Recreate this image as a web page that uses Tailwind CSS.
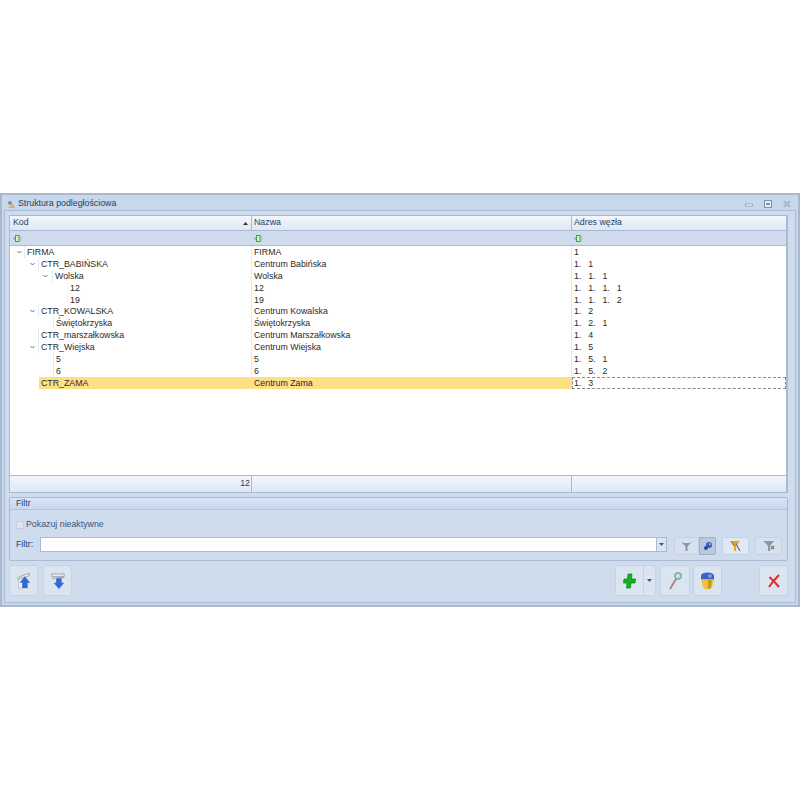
<!DOCTYPE html>
<html lang="en">
<head>
    <meta charset="UTF-8">
    <title>Struktura podległościowa</title>
    <script src="https://cdn.jsdelivr.net/npm/@tailwindcss/browser@4"></script>
</head>
<body class="bg-white h-[800px] overflow-hidden pt-[193px] font-['Liberation_Sans',sans-serif] text-[8.8px] text-[#2a2a2a]">

    <!-- window -->
    <div class="h-[414px] w-[800px] flex flex-col bg-[#c8d8ec] border-2 border-[#a9b8cd] px-[2px] pb-[2px]">
        <!-- title bar -->
        <div class="h-[15px] flex items-center pl-[3px] pr-[5px] pt-[3px] text-[#26405f] shrink-0">
            <svg class="w-[9px] h-[9px] mr-[2px]" viewBox="0 0 9 9"><circle cx="3" cy="3" r="2" fill="#8a8f96"/><path d="M1 8 L8 8 L6 4 Z" fill="#d9b46a"/></svg>
            <span>Struktura podległościowa</span>
            <div class="ml-auto flex items-center gap-[11px]">
                <svg class="w-[8px] h-[8px]" viewBox="0 0 8 8"><rect x="0.5" y="4" width="7" height="2" fill="#fff" stroke="#7d92ae" stroke-width="0.7"/></svg>
                <svg class="w-[8px] h-[8px]" viewBox="0 0 8 8"><rect x="0.5" y="0.5" width="7" height="7" fill="#e4ecf6" stroke="#7d92ae"/><rect x="2" y="3" width="4" height="2" fill="#7d92ae"/></svg>
                <svg class="w-[8px] h-[8px]" viewBox="0 0 8 8"><path d="M1 1 L7 7 M7 1 L1 7" stroke="#7d92ae" stroke-width="1.6"/><path d="M1 1 L7 7 M7 1 L1 7" stroke="#eef3fa" stroke-width="0.5"/></svg>
            </div>
        </div>

        <div class="flex-1 flex flex-col bg-[#cfdcee] border border-[#a8bbd3] pl-[4px] pr-[7px] pt-[4px]">
            <!-- grid -->
            <div class="h-[278px] flex flex-col bg-white border border-[#a8bbd3] border-r-[2px] shrink-0">
                <div class="h-[15px] grid grid-cols-[242px_320px_1fr] bg-gradient-to-b from-[#f3f7fc] to-[#dde8f5] border-b border-[#a8bbd3] text-[#26405f] shrink-0">
                    <div class="flex items-center justify-between pl-[3px] pr-[3px] border-r border-[#a8bbd3]">
                        <span>Kod</span>
                        <svg class="w-[5px] h-[3px]" viewBox="0 0 5 3"><path d="M0 3 L2.5 0 L5 3 Z" fill="#333"/></svg>
                    </div>
                    <div class="flex items-center pl-[2px] border-r border-[#a8bbd3]">Nazwa</div>
                    <div class="flex items-center pl-[2px]">Adres węzła</div>
                </div>
                <div class="h-[15px] grid grid-cols-[242px_320px_1fr] bg-[#cfdcee] border-b border-[#a8bbd3] shrink-0">
                    <div class="flex items-center pl-[3px]"><svg class="w-[9px] h-[7px]" viewBox="0 0 9 7"><rect x="0" y="2.5" width="2" height="2" fill="#8fb0c8"/><rect x="2.5" y="0.5" width="3.5" height="6" fill="#d9f0d0" stroke="#35a83a"/><path d="M9 2 L7 2 L7 5 L9 5" stroke="#9ab" fill="none" stroke-width="0.7"/></svg></div>
                    <div class="flex items-center pl-[2px]"><svg class="w-[9px] h-[7px]" viewBox="0 0 9 7"><rect x="0" y="2.5" width="2" height="2" fill="#8fb0c8"/><rect x="2.5" y="0.5" width="3.5" height="6" fill="#d9f0d0" stroke="#35a83a"/><path d="M9 2 L7 2 L7 5 L9 5" stroke="#9ab" fill="none" stroke-width="0.7"/></svg></div>
                    <div class="flex items-center pl-[2px]"><svg class="w-[9px] h-[7px]" viewBox="0 0 9 7"><rect x="0" y="2.5" width="2" height="2" fill="#8fb0c8"/><rect x="2.5" y="0.5" width="3.5" height="6" fill="#d9f0d0" stroke="#35a83a"/><path d="M9 2 L7 2 L7 5 L9 5" stroke="#9ab" fill="none" stroke-width="0.7"/></svg></div>
                </div>

                <!-- rows -->
                <div class="flex-1">
                    <div class="h-[11.9px] grid grid-cols-[242px_320px_1fr] leading-[12px]">
                        <div class="pl-[7px] flex items-center border-r border-[#e3e9f2]"><svg class="w-[5px] h-[4px] mr-[2px]" viewBox="0 0 5 4"><path d="M0.5 1 L2.5 3 L4.5 1" stroke="#68727e" fill="none"/></svg><span class="pl-[2px] border-l border-[#e3e9f2]">FIRMA</span></div>
                        <div class="pl-[2px] border-r border-[#e3e9f2]">FIRMA</div><div class="pl-[2px] [word-spacing:1px]">1</div>
                    </div>
                    <div class="h-[11.9px] grid grid-cols-[242px_320px_1fr] leading-[12px]">
                        <div class="pl-[20px] flex items-center border-r border-[#e3e9f2]"><svg class="w-[5px] h-[4px] mr-[3px]" viewBox="0 0 5 4"><path d="M0.5 1 L2.5 3 L4.5 1" stroke="#68727e" fill="none"/></svg><span class="pl-[2px] border-l border-[#e3e9f2]">CTR_BABIŃSKA</span></div>
                        <div class="pl-[2px] border-r border-[#e3e9f2]">Centrum Babińska</div><div class="pl-[2px] [word-spacing:1px]">1.&nbsp; 1</div>
                    </div>
                    <div class="h-[11.9px] grid grid-cols-[242px_320px_1fr] leading-[12px]">
                        <div class="pl-[33px] flex items-center border-r border-[#e3e9f2]"><svg class="w-[5px] h-[4px] mr-[4px]" viewBox="0 0 5 4"><path d="M0.5 1 L2.5 3 L4.5 1" stroke="#68727e" fill="none"/></svg><span class="pl-[2px] border-l border-[#e3e9f2]">Wolska</span></div>
                        <div class="pl-[2px] border-r border-[#e3e9f2]">Wolska</div><div class="pl-[2px] [word-spacing:1px]">1.&nbsp; 1.&nbsp; 1</div>
                    </div>
                    <div class="h-[11.9px] grid grid-cols-[242px_320px_1fr] leading-[12px]">
                        <div class="pl-[57px] flex items-center border-r border-[#e3e9f2]"><span class="pl-[2px] border-l border-[#eef2f7]">12</span></div>
                        <div class="pl-[2px] border-r border-[#e3e9f2]">12</div><div class="pl-[2px] [word-spacing:1px]">1.&nbsp; 1.&nbsp; 1.&nbsp; 1</div>
                    </div>
                    <div class="h-[11.9px] grid grid-cols-[242px_320px_1fr] leading-[12px]">
                        <div class="pl-[57px] flex items-center border-r border-[#e3e9f2]"><span class="pl-[2px] border-l border-[#eef2f7]">19</span></div>
                        <div class="pl-[2px] border-r border-[#e3e9f2]">19</div><div class="pl-[2px] [word-spacing:1px]">1.&nbsp; 1.&nbsp; 1.&nbsp; 2</div>
                    </div>
                    <div class="h-[11.9px] grid grid-cols-[242px_320px_1fr] leading-[12px]">
                        <div class="pl-[20px] flex items-center border-r border-[#e3e9f2]"><svg class="w-[5px] h-[4px] mr-[3px]" viewBox="0 0 5 4"><path d="M0.5 1 L2.5 3 L4.5 1" stroke="#68727e" fill="none"/></svg><span class="pl-[2px] border-l border-[#e3e9f2]">CTR_KOWALSKA</span></div>
                        <div class="pl-[2px] border-r border-[#e3e9f2]">Centrum Kowalska</div><div class="pl-[2px] [word-spacing:1px]">1.&nbsp; 2</div>
                    </div>
                    <div class="h-[11.9px] grid grid-cols-[242px_320px_1fr] leading-[12px]">
                        <div class="pl-[43px] flex items-center border-r border-[#e3e9f2]"><span class="pl-[2px] border-l border-[#e3e9f2]">Świętokrzyska</span></div>
                        <div class="pl-[2px] border-r border-[#e3e9f2]">Świętokrzyska</div><div class="pl-[2px] [word-spacing:1px]">1.&nbsp; 2.&nbsp; 1</div>
                    </div>
                    <div class="h-[11.9px] grid grid-cols-[242px_320px_1fr] leading-[12px]">
                        <div class="pl-[28px] flex items-center border-r border-[#e3e9f2]"><span class="pl-[2px] border-l border-[#e3e9f2]">CTR_marszałkowska</span></div>
                        <div class="pl-[2px] border-r border-[#e3e9f2]">Centrum Marszałkowska</div><div class="pl-[2px] [word-spacing:1px]">1.&nbsp; 4</div>
                    </div>
                    <div class="h-[11.9px] grid grid-cols-[242px_320px_1fr] leading-[12px]">
                        <div class="pl-[20px] flex items-center border-r border-[#e3e9f2]"><svg class="w-[5px] h-[4px] mr-[3px]" viewBox="0 0 5 4"><path d="M0.5 1 L2.5 3 L4.5 1" stroke="#68727e" fill="none"/></svg><span class="pl-[2px] border-l border-[#e3e9f2]">CTR_Wiejska</span></div>
                        <div class="pl-[2px] border-r border-[#e3e9f2]">Centrum Wiejska</div><div class="pl-[2px] [word-spacing:1px]">1.&nbsp; 5</div>
                    </div>
                    <div class="h-[11.9px] grid grid-cols-[242px_320px_1fr] leading-[12px]">
                        <div class="pl-[43px] flex items-center border-r border-[#e3e9f2]"><span class="pl-[2px] border-l border-[#e3e9f2]">5</span></div>
                        <div class="pl-[2px] border-r border-[#e3e9f2]">5</div><div class="pl-[2px] [word-spacing:1px]">1.&nbsp; 5.&nbsp; 1</div>
                    </div>
                    <div class="h-[11.9px] grid grid-cols-[242px_320px_1fr] leading-[12px]">
                        <div class="pl-[43px] flex items-center border-r border-[#e3e9f2]"><span class="pl-[2px] border-l border-[#e3e9f2]">6</span></div>
                        <div class="pl-[2px] border-r border-[#e3e9f2]">6</div><div class="pl-[2px] [word-spacing:1px]">1.&nbsp; 5.&nbsp; 2</div>
                    </div>
                    <div class="h-[12px] grid grid-cols-[242px_320px_1fr] leading-[12px]">
                        <div class="ml-[29px] pl-[2px] bg-[#ffdf85] border-r border-[#f1e3b5]">CTR_ZAMA</div>
                        <div class="pl-[2px] bg-[#ffdf85]">Centrum Zama</div>
                        <div class="pl-[1px] border border-dashed border-[#8a8a8a] leading-[10px] [word-spacing:1px]">1.&nbsp; 3</div>
                    </div>
                </div>

                <!-- summary -->
                <div class="h-[17px] grid grid-cols-[242px_320px_1fr] bg-gradient-to-b from-[#f3f7fc] to-[#dce7f5] border-t border-[#a8bbd3] shrink-0">
                    <div class="flex items-center justify-end pr-[1px] border-r border-[#a8bbd3] text-[#26405f]">12</div>
                    <div class="border-r border-[#a8bbd3]"></div>
                    <div></div>
                </div>
            </div>

            <!-- filter group -->
            <div class="mt-[4px] h-[64px] flex flex-col border border-[#a8bbd3] rounded-[2px] shrink-0">
                <div class="h-[12px] pl-[6px] flex items-center bg-gradient-to-b from-[#d8e5f5] to-[#c6d8ef] border-b border-[#b5c6dc] text-[#26405f] shrink-0">Filtr</div>
                <div class="flex items-center h-[27px] pt-[2px] pl-[6px] gap-[2px] text-[#3d5574] shrink-0">
                    <div class="w-[8px] h-[8px] bg-[#dbe4f0] border border-[#c3cfdf]"></div>
                    <span>Pokazuj nieaktywne</span>
                </div>
                <div class="flex items-start pl-[6px] text-[#26405f]">
                    <span class="w-[24px] leading-[15px]">Filtr:</span>
                    <div class="w-[627px] h-[15px] bg-white border border-[#a8bbd3] flex justify-end">
                        <div class="w-[10px] bg-[#dbe5f2] border-l border-[#a8bbd3] flex items-center justify-center"><svg class="w-[5px] h-[3px]" viewBox="0 0 5 3"><path d="M0 0 L5 0 L2.5 3 Z" fill="#44586f"/></svg></div>
                    </div>
                    <div class="ml-[7px] flex">
                        <div class="w-[25px] h-[18px] bg-[#d6e1f0] border border-[#c5d2e3] rounded-l-[2px] flex items-center justify-center">
                            <svg class="w-[11px] h-[11px]" viewBox="0 0 11 11"><path d="M0.5 1 L10.5 1 L6.5 5.5 L6.5 10 L4.5 10 L4.5 5.5 Z" fill="#8f969c"/><path d="M2 1.5 L9 1.5" stroke="#dfe5ec"/></svg>
                        </div>
                        <div class="w-[17px] h-[18px] bg-[#b9c9de] border border-[#9db0c9] rounded-r-[2px] flex items-center justify-center">
                            <svg class="w-[10px] h-[10px]" viewBox="0 0 10 10"><circle cx="6" cy="4" r="3" fill="#2f5fc8"/><circle cx="3" cy="7" r="2" fill="#2748a8"/><circle cx="6.8" cy="3.2" r="1" fill="#a7c3f2"/></svg>
                        </div>
                    </div>
                    <div class="ml-[6px] w-[27px] h-[18px] bg-[#dfe8f4] border border-[#c5d2e3] rounded-[2px] flex items-center justify-center">
                        <svg class="w-[13px] h-[12px]" viewBox="0 0 13 12"><path d="M0.5 1 L11 1 L7 6 L7 11 L5 11 L5 6 Z" fill="#e0a52a"/><path d="M7 4 L11 11" stroke="#7d6a4b" stroke-width="1.2"/><path d="M3 2 L5 6" stroke="#a8691c"/></svg>
                    </div>
                    <div class="ml-[6px] w-[27px] h-[18px] bg-[#d6e1f0] border border-[#c5d2e3] rounded-[2px] flex items-center justify-center">
                        <svg class="w-[12px] h-[12px]" viewBox="0 0 12 12"><path d="M0.5 1 L11 1 L7 6 L7 11 L5 11 L5 6 Z" fill="#8f969c"/><path d="M8 6 L11 9 M11 6 L8 9" stroke="#777" stroke-width="1.2"/></svg>
                    </div>
                </div>
            </div>

            <!-- bottom buttons -->
            <div class="mt-[4px] flex items-start">
                <button class="w-[29px] h-[31px] bg-[#dbe5f2] border border-[#c5d2e3] rounded-[3px] flex items-center justify-center">
                    <svg class="w-[16px] h-[18px]" viewBox="0 0 18 20"><path d="M2 6 L15 1 L15 4 L2 8 Z" fill="#e8e8e8" stroke="#777" stroke-width="0.6"/><path d="M3 8 L3 18 L14 18" stroke="#bbb" fill="#eef1f5"/><path d="M10 5 L16 12 L13 12 L13 18 L7 18 L7 12 L4 12 Z" fill="#3168d8"/></svg>
                </button>
                <button class="ml-[5px] w-[29px] h-[31px] bg-[#dbe5f2] border border-[#c5d2e3] rounded-[3px] flex items-center justify-center">
                    <svg class="w-[16px] h-[18px]" viewBox="0 0 18 20"><path d="M2 2 L16 2 L16 5 L2 5 Z" fill="#e8e8e8" stroke="#777" stroke-width="0.6"/><path d="M2 7 L16 6" stroke="#999"/><path d="M7 7 L13 7 L13 12 L16 12 L10 19 L4 12 L7 12 Z" fill="#3168d8"/></svg>
                </button>

                <div class="ml-auto flex items-start">
                    <div class="flex h-[31px] border border-[#c5d2e3] rounded-[3px] bg-[#dbe5f2]">
                        <div class="w-[28px] flex items-center justify-center border-r border-[#c5d2e3]">
                            <svg class="w-[13px] h-[16px]" viewBox="0 0 13 16"><path d="M5 1 L9 1 L8.5 6 L12.5 6 L12 10 L8 10 L7.5 15 L3.5 15 L4 10 L0.5 10 L1 6 L4.5 6 Z" fill="#13b322" stroke="#0c7f19" stroke-width="0.7"/></svg>
                        </div>
                        <div class="w-[11px] flex items-center justify-center"><svg class="w-[5px] h-[3px]" viewBox="0 0 5 3"><path d="M0 0 L5 0 L2.5 3 Z" fill="#44586f"/></svg></div>
                    </div>
                    <button class="ml-[4px] w-[30px] h-[31px] bg-[#dbe5f2] border border-[#c5d2e3] rounded-[3px] flex items-center justify-center">
                        <svg class="w-[13px] h-[18px]" viewBox="0 0 13 18"><path d="M1 17 L7 7" stroke="#b08a78" stroke-width="2"/><circle cx="9" cy="4" r="3.2" fill="#b9e2ea" stroke="#7f9a8f" stroke-width="1.2"/></svg>
                    </button>
                    <button class="ml-[3px] w-[29px] h-[31px] bg-[#dbe5f2] border border-[#c5d2e3] rounded-[3px] flex items-center justify-center">
                        <svg class="w-[15px] h-[18px]" viewBox="0 0 15 18"><path d="M1 4 Q1 0.5 7.5 0.5 Q14 0.5 14 4 L14 7.5 L1 7.5 Z" fill="#3a62c8"/><path d="M1 7.5 L14 7.5 L12 15 Q11 17.5 7.5 17.5 Q4 17.5 3 15 Z" fill="#eec23a"/><path d="M8 8 L12 8 L11 16 L8 17 Z" fill="#c69a22"/><circle cx="10" cy="4" r="1.3" fill="none" stroke="#cfe0fa" stroke-width="0.7"/></svg>
                    </button>
                    <button class="ml-[37px] w-[29px] h-[31px] bg-[#dbe5f2] border border-[#c5d2e3] rounded-[3px] flex items-center justify-center">
                        <svg class="w-[12px] h-[14px]" viewBox="0 0 12 14"><path d="M1 13 Q5 7 11 1 M1.5 3 Q6 7 11 13" stroke="#de2a2a" stroke-width="2" fill="none"/></svg>
                    </button>
                </div>
            </div>
        </div>
    </div>

</body>
</html>
